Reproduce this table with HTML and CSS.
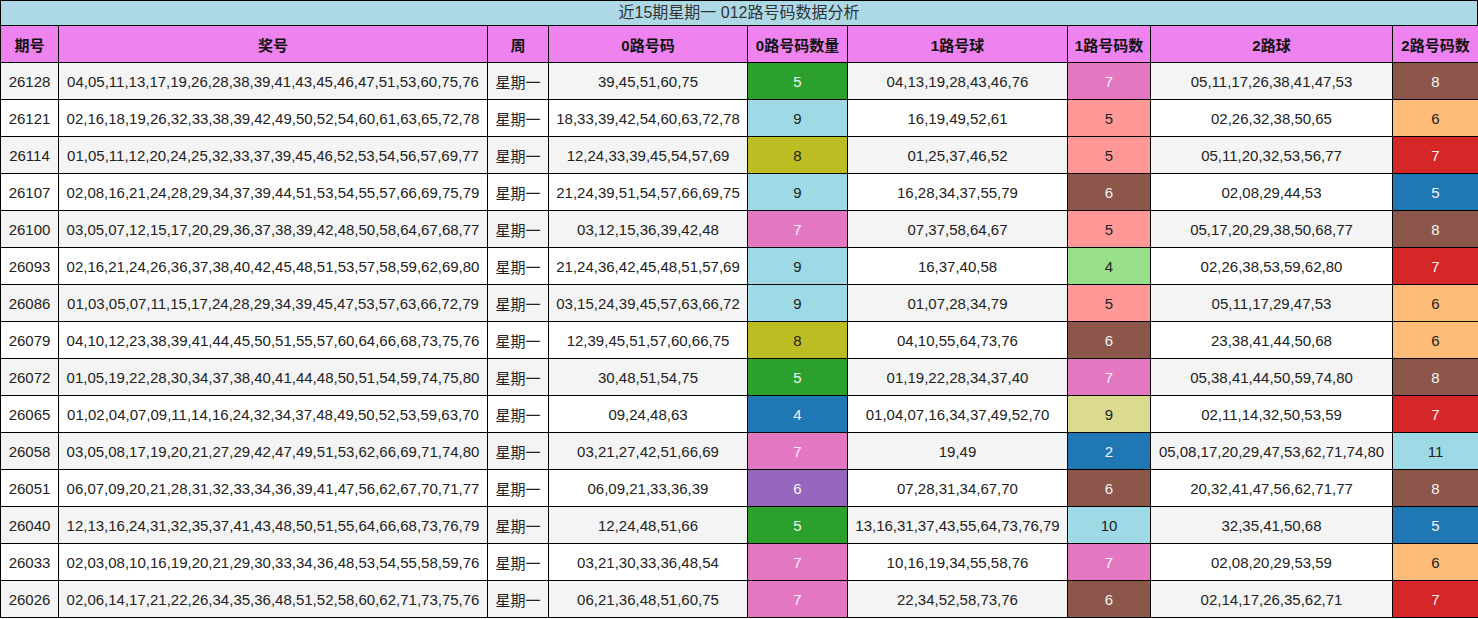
FILE: index.html
```html
<!DOCTYPE html>
<html lang="zh">
<head>
<meta charset="utf-8">
<title>近15期星期一 012路号码数据分析</title>
<link rel="stylesheet" href="styles.css">
</head>
<body>
<div class="title">近15期星期一 012路号码数据分析</div>
<table class="grid">
<colgroup>
<col class="w1"><col class="w2"><col class="w3"><col class="w4"><col class="w5"><col class="w6"><col class="w7"><col class="w8"><col class="w9">
</colgroup>
<thead>
<tr><th>期号</th><th>奖号</th><th>周</th><th>0路号码</th><th>0路号码数量</th><th>1路号球</th><th>1路号码数</th><th>2路球</th><th>2路号码数</th></tr>
</thead>
<tbody>
<tr><td>26128</td><td>04,05,11,13,17,19,26,28,38,39,41,43,45,46,47,51,53,60,75,76</td><td>星期一</td><td>39,45,51,60,75</td><td class="c-green">5</td><td>04,13,19,28,43,46,76</td><td class="c-pink">7</td><td>05,11,17,26,38,41,47,53</td><td class="c-brown">8</td></tr>
<tr><td>26121</td><td>02,16,18,19,26,32,33,38,39,42,49,50,52,54,60,61,63,65,72,78</td><td>星期一</td><td>18,33,39,42,54,60,63,72,78</td><td class="c-lblue">9</td><td>16,19,49,52,61</td><td class="c-salmon">5</td><td>02,26,32,38,50,65</td><td class="c-peach">6</td></tr>
<tr><td>26114</td><td>01,05,11,12,20,24,25,32,33,37,39,45,46,52,53,54,56,57,69,77</td><td>星期一</td><td>12,24,33,39,45,54,57,69</td><td class="c-olive">8</td><td>01,25,37,46,52</td><td class="c-salmon">5</td><td>05,11,20,32,53,56,77</td><td class="c-red">7</td></tr>
<tr><td>26107</td><td>02,08,16,21,24,28,29,34,37,39,44,51,53,54,55,57,66,69,75,79</td><td>星期一</td><td>21,24,39,51,54,57,66,69,75</td><td class="c-lblue">9</td><td>16,28,34,37,55,79</td><td class="c-brown">6</td><td>02,08,29,44,53</td><td class="c-blue">5</td></tr>
<tr><td>26100</td><td>03,05,07,12,15,17,20,29,36,37,38,39,42,48,50,58,64,67,68,77</td><td>星期一</td><td>03,12,15,36,39,42,48</td><td class="c-pink">7</td><td>07,37,58,64,67</td><td class="c-salmon">5</td><td>05,17,20,29,38,50,68,77</td><td class="c-brown">8</td></tr>
<tr><td>26093</td><td>02,16,21,24,26,36,37,38,40,42,45,48,51,53,57,58,59,62,69,80</td><td>星期一</td><td>21,24,36,42,45,48,51,57,69</td><td class="c-lblue">9</td><td>16,37,40,58</td><td class="c-lgreen">4</td><td>02,26,38,53,59,62,80</td><td class="c-red">7</td></tr>
<tr><td>26086</td><td>01,03,05,07,11,15,17,24,28,29,34,39,45,47,53,57,63,66,72,79</td><td>星期一</td><td>03,15,24,39,45,57,63,66,72</td><td class="c-lblue">9</td><td>01,07,28,34,79</td><td class="c-salmon">5</td><td>05,11,17,29,47,53</td><td class="c-peach">6</td></tr>
<tr><td>26079</td><td>04,10,12,23,38,39,41,44,45,50,51,55,57,60,64,66,68,73,75,76</td><td>星期一</td><td>12,39,45,51,57,60,66,75</td><td class="c-olive">8</td><td>04,10,55,64,73,76</td><td class="c-brown">6</td><td>23,38,41,44,50,68</td><td class="c-peach">6</td></tr>
<tr><td>26072</td><td>01,05,19,22,28,30,34,37,38,40,41,44,48,50,51,54,59,74,75,80</td><td>星期一</td><td>30,48,51,54,75</td><td class="c-green">5</td><td>01,19,22,28,34,37,40</td><td class="c-pink">7</td><td>05,38,41,44,50,59,74,80</td><td class="c-brown">8</td></tr>
<tr><td>26065</td><td>01,02,04,07,09,11,14,16,24,32,34,37,48,49,50,52,53,59,63,70</td><td>星期一</td><td>09,24,48,63</td><td class="c-blue">4</td><td>01,04,07,16,34,37,49,52,70</td><td class="c-khaki">9</td><td>02,11,14,32,50,53,59</td><td class="c-red">7</td></tr>
<tr><td>26058</td><td>03,05,08,17,19,20,21,27,29,42,47,49,51,53,62,66,69,71,74,80</td><td>星期一</td><td>03,21,27,42,51,66,69</td><td class="c-pink">7</td><td>19,49</td><td class="c-blue">2</td><td>05,08,17,20,29,47,53,62,71,74,80</td><td class="c-lblue">11</td></tr>
<tr><td>26051</td><td>06,07,09,20,21,28,31,32,33,34,36,39,41,47,56,62,67,70,71,77</td><td>星期一</td><td>06,09,21,33,36,39</td><td class="c-purple">6</td><td>07,28,31,34,67,70</td><td class="c-brown">6</td><td>20,32,41,47,56,62,71,77</td><td class="c-brown">8</td></tr>
<tr><td>26040</td><td>12,13,16,24,31,32,35,37,41,43,48,50,51,55,64,66,68,73,76,79</td><td>星期一</td><td>12,24,48,51,66</td><td class="c-green">5</td><td>13,16,31,37,43,55,64,73,76,79</td><td class="c-lblue">10</td><td>32,35,41,50,68</td><td class="c-blue">5</td></tr>
<tr><td>26033</td><td>02,03,08,10,16,19,20,21,29,30,33,34,36,48,53,54,55,58,59,76</td><td>星期一</td><td>03,21,30,33,36,48,54</td><td class="c-pink">7</td><td>10,16,19,34,55,58,76</td><td class="c-pink">7</td><td>02,08,20,29,53,59</td><td class="c-peach">6</td></tr>
<tr><td>26026</td><td>02,06,14,17,21,22,26,34,35,36,48,51,52,58,60,62,71,73,75,76</td><td>星期一</td><td>06,21,36,48,51,60,75</td><td class="c-pink">7</td><td>22,34,52,58,73,76</td><td class="c-brown">6</td><td>02,14,17,26,35,62,71</td><td class="c-red">7</td></tr>
</tbody>
</table>
</body>
</html>
```

FILE: styles.css
```css
* { box-sizing: border-box; }
html, body { margin: 0; padding: 0; background: #fff; }
body {
  font-family: "Liberation Sans", Arial, "Noto Sans CJK SC", sans-serif;
  color: #222;
  width: 1478px;
}
.title {
  height: 25px;
  border: 1px solid #000;
  border-bottom: 0;
  background: #add8e6;
  text-align: center;
  font-size: 16px;
  line-height: 24px;
  color: #333;
}
.grid {
  width: 1478px;
  table-layout: fixed;
  border-collapse: collapse;
  border: 1px solid #000;
  font-size: 15px;
}
.w1 { width: 58px; }
.w2 { width: 429px; }
.w3 { width: 61px; }
.w4 { width: 199px; }
.w5 { width: 100px; }
.w6 { width: 220px; }
.w7 { width: 83px; }
.w8 { width: 242px; }
.w9 { width: 86px; }
.grid th, .grid td {
  border: 1px solid #000;
  height: 37px;
  padding: 1px 2px 0;
  text-align: center;
  vertical-align: middle;
  white-space: nowrap;
  overflow: hidden;
}
.grid th {
  background: #ee82ee;
  font-weight: bold;
  color: #111;
}
.grid tbody tr:nth-child(odd) { background: #f4f4f4; }
.grid tbody tr:nth-child(even) { background: #fff; }
.c-green { background: #2ca02c; color: #f4f4f4; }
.c-lblue { background: #9edae5; color: #222; }
.c-olive { background: #bcbd22; color: #222; }
.c-pink { background: #e377c2; color: #f4f4f4; }
.c-blue { background: #1f77b4; color: #f4f4f4; }
.c-purple { background: #9467bd; color: #f4f4f4; }
.c-salmon { background: #ff9896; color: #222; }
.c-brown { background: #8c564b; color: #f4f4f4; }
.c-lgreen { background: #98df8a; color: #222; }
.c-khaki { background: #dbdb8d; color: #222; }
.c-peach { background: #ffbb78; color: #222; }
.c-red { background: #d62728; color: #f4f4f4; }
```
